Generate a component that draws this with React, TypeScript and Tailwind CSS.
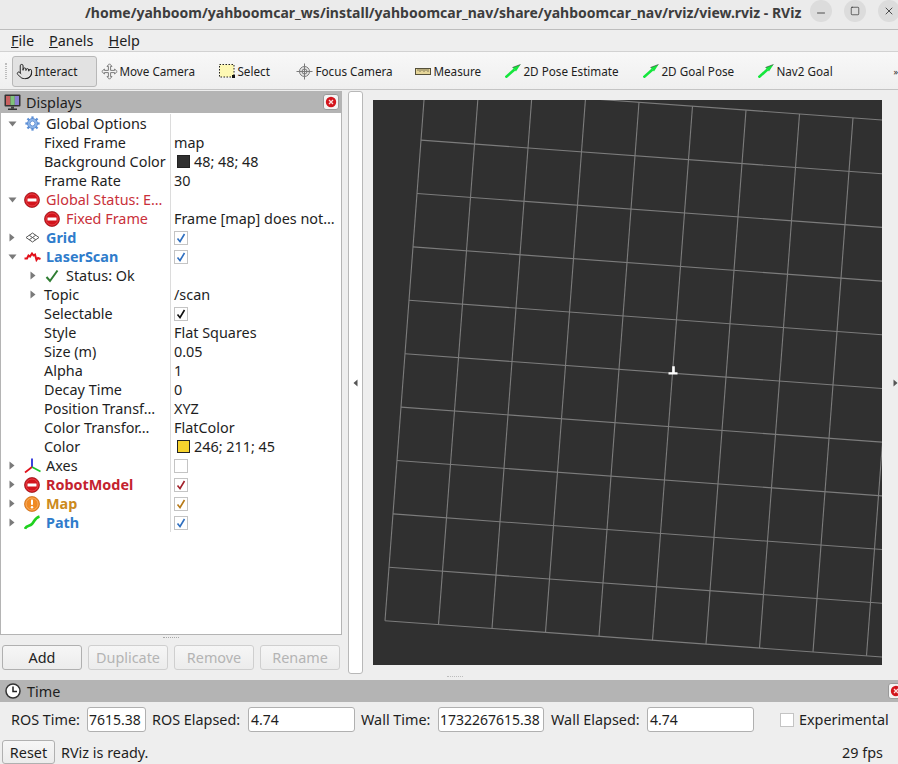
import { ReactNode } from "react";
import { Minus, Square, X, Pointer } from "lucide-react";

function DownArrow() {
  return (
    <svg width="9" height="6" viewBox="0 0 9 6">
      <path d="M0.5 0.5h8L4.5 5.5z" fill="#7a7a7a" />
    </svg>
  );
}

function RightArrow() {
  return (
    <svg width="6" height="9" viewBox="0 0 6 9">
      <path d="M0.5 0.5v8L5.5 4.5z" fill="#7a7a7a" />
    </svg>
  );
}

function StopIcon({ size = 16 }: { size?: number }) {
  return (
    <svg width={size} height={size} viewBox="0 0 16 16">
      <circle cx="8" cy="8" r="7.5" fill="#d3141c" stroke="#8f1015" strokeWidth="0.7" />
      <circle cx="8" cy="8" r="6" fill="none" stroke="#ee5a5f" strokeWidth="0.6" />
      <rect x="3.5" y="6.4" width="9" height="3.2" rx="0.4" fill="#fff" />
    </svg>
  );
}

function WarnIcon() {
  return (
    <svg width="16" height="16" viewBox="0 0 16 16">
      <circle cx="8" cy="8" r="7.5" fill="#f08a24" stroke="#c9660f" strokeWidth="0.7" />
      <circle cx="8" cy="8" r="6" fill="none" stroke="#f8b878" strokeWidth="0.7" />
      <rect x="7" y="3.5" width="2" height="5.5" rx="0.8" fill="#fff" />
      <circle cx="8" cy="11.3" r="1.2" fill="#fff" />
    </svg>
  );
}

function GearIcon() {
  const teeth = [0, 45, 90, 135, 180, 225, 270, 315];
  return (
    <svg width="15" height="15" viewBox="0 0 16 16">
      {teeth.map((a) => (
        <rect key={a} x="6.8" y="0.4" width="2.4" height="3" fill="#5b8fd6" transform={`rotate(${a} 8 8)`} />
      ))}
      <circle cx="8" cy="8" r="5.3" fill="#8fb6e8" stroke="#4f82cc" strokeWidth="0.8" />
      <circle cx="8" cy="8" r="2.6" fill="#fff" stroke="#4f82cc" strokeWidth="0.8" />
    </svg>
  );
}

function GridIcon() {
  return (
    <svg width="15" height="11" viewBox="0 0 15 11" fill="none" stroke="#5a5a5a" strokeWidth="1">
      <path d="M7.5 1 14 5.5 7.5 10 1 5.5z" />
      <path d="M4.2 3.2 10.8 7.8M10.8 3.2 4.2 7.8" />
    </svg>
  );
}

function LaserIcon() {
  return (
    <svg width="17" height="10" viewBox="0 0 17 10" fill="none" stroke="#e2101a" strokeWidth="2">
      <path d="M0.5 6.5 3 6.5 4.5 3.5 6 4.5 8 1.5 9.5 3.5 11 2.5 12.5 8 14 6 16.5 7" />
    </svg>
  );
}

function CheckMark({ color = "#2f7d32" }: { color?: string }) {
  return (
    <svg width="14" height="14" viewBox="0 0 14 14" fill="none" stroke={color} strokeWidth="2">
      <path d="M1.5 8 5 12 12.5 1.5" />
    </svg>
  );
}

function AxesIcon() {
  return (
    <svg width="17" height="16" viewBox="0 0 17 16" fill="none" strokeWidth="1.7">
      <path d="M8 9V0.5" stroke="#1b22d8" />
      <path d="M8 9 1 14.5" stroke="#e0101a" />
      <path d="M8 9 16.5 13.5" stroke="#1fc42a" />
    </svg>
  );
}

function PathIcon() {
  return (
    <svg width="16" height="15" viewBox="0 0 16 15" fill="none" stroke="#1fd11f" strokeWidth="2.6">
      <path d="M1 13.8C2.5 10 5.5 11.5 8 9 10.5 6.5 10.5 3 15.5 1.5" />
    </svg>
  );
}

function MonitorIcon() {
  return (
    <svg width="17" height="17" viewBox="0 0 17 17" className="shrink-0">
      <rect x="0.5" y="0.5" width="16" height="12" rx="1" fill="#333" />
      <rect x="2" y="2" width="4.4" height="9" fill="#c9605f" />
      <rect x="6.4" y="2" width="4.4" height="9" fill="#7fc27a" />
      <rect x="10.8" y="2" width="4.2" height="9" fill="#8a7fd0" />
      <rect x="7" y="12.5" width="3" height="2.2" fill="#444" />
      <rect x="4" y="14.5" width="9" height="1.5" fill="#333" />
    </svg>
  );
}

function ClockIcon() {
  return (
    <svg width="16" height="16" viewBox="0 0 16 16" fill="none" className="shrink-0">
      <circle cx="8" cy="8" r="7" fill="#fff" stroke="#333" strokeWidth="1.5" />
      <path d="M8 3.5V8.5H12" stroke="#222" strokeWidth="1.5" />
    </svg>
  );
}

function CloseBadge() {
  return (
    <span className="flex h-[16px] w-[16px] shrink-0 items-center justify-center rounded-[3px] border border-[#9a9a9a] bg-[#f4f4f4]">
      <svg width="12" height="12" viewBox="0 0 12 12" className="shrink-0">
        <circle cx="6" cy="6" r="5.2" fill="#d3141c" />
        <path d="M4 4l4 4M8 4l-4 4" stroke="#fbdcdc" strokeWidth="1.3" />
      </svg>
    </span>
  );
}

function MoveIcon() {
  return (
    <svg width="17" height="17" viewBox="0 0 17 17" fill="#f2f2f2" stroke="#6e6e6e" strokeWidth="0.9">
      <path d="M8.5 0.8 11 3.4H9.6V7.4H13.6V6L16.2 8.5 13.6 11V9.6H9.6V13.6H11L8.5 16.2 6 13.6H7.4V9.6H3.4V11L0.8 8.5 3.4 6V7.4H7.4V3.4H6z" />
    </svg>
  );
}

function SelectIcon() {
  return (
    <svg width="16" height="14" viewBox="0 0 16 14">
      <rect x="0.5" y="0.5" width="14.5" height="12.5" fill="#fdf8b4" stroke="#222" strokeWidth="1" strokeDasharray="1.5 1.5" />
      <rect x="13" y="11" width="3" height="3" fill="#111" />
    </svg>
  );
}

function FocusIcon() {
  return (
    <svg width="17" height="17" viewBox="0 0 17 17" fill="none" stroke="#7a7a7a">
      <circle cx="8.5" cy="8.5" r="5" fill="#e6e6e6" />
      <circle cx="8.5" cy="8.5" r="2.5" />
      <path d="M8.5 0.5V16.5M0.5 8.5H16.5" />
    </svg>
  );
}

function RulerIcon() {
  return (
    <svg width="16" height="7" viewBox="0 0 16 7">
      <rect x="0.5" y="0.5" width="15" height="6" fill="#e6d69a" stroke="#55503a" />
      <path d="M3 1v2M5 1v3M7 1v2M9 1v3M11 1v2M13 1v3" stroke="#55503a" strokeWidth="0.7" />
    </svg>
  );
}

function GreenArrow() {
  return (
    <svg width="16" height="14" viewBox="0 0 16 14">
      <path d="M0.5 13.5 9.5 5.5" stroke="#14e63c" strokeWidth="2.6" />
      <path d="M15.5 0.5 7.5 3.5 11 7.5z" fill="#14e63c" />
      <path d="M15.5 0.5 7.5 3.5" stroke="#333" strokeWidth="0.6" />
    </svg>
  );
}

function Checkbox({ color, checked = true }: { color?: string; checked?: boolean }) {
  return (
    <span className="flex h-[14px] w-[14px] items-center justify-center border border-[#c4c4c4] bg-white">
      {checked && (
        <svg width="10" height="10" viewBox="0 0 10 10" fill="none" stroke={color} strokeWidth="1.6">
          <path d="M1.5 5.5 4 8.5 8.5 1" />
        </svg>
      )}
    </span>
  );
}

function Swatch({ className, text }: { className: string; text: string }) {
  return (
    <span className="ml-[3px] flex items-center">
      <span className={`mr-[4px] h-[13px] w-[13px] border border-[#222] ${className}`} />
      {text}
    </span>
  );
}

type Row = {
  arrow?: ReactNode;
  arrowClass?: string;
  icon?: ReactNode;
  iconClass?: string;
  label: string;
  labelClass: string;
  value?: ReactNode;
};

const PROP = "ml-[43px]";
const TOP_ARROW = "w-[23px] pl-[7px]";
const BOLD_BLUE = "font-bold text-[#2f7ccb]";

const rows: Row[] = [
  { arrow: <DownArrow />, arrowClass: TOP_ARROW, icon: <GearIcon />, iconClass: "w-[22px] pl-[1px]", label: "Global Options", labelClass: "" },
  { label: "Fixed Frame", labelClass: PROP, value: "map" },
  { label: "Background Color", labelClass: PROP, value: <Swatch className="bg-[#303030]" text="48; 48; 48" /> },
  { label: "Frame Rate", labelClass: PROP, value: "30" },
  { arrow: <DownArrow />, arrowClass: TOP_ARROW, icon: <StopIcon />, iconClass: "w-[22px]", label: "Global Status: E…", labelClass: "text-[#c9303a]" },
  { icon: <StopIcon />, iconClass: "ml-[43px] w-[22px]", label: "Fixed Frame", labelClass: "text-[#c9303a]", value: "Frame [map] does not…" },
  { arrow: <RightArrow />, arrowClass: "w-[23px] pl-[8px]", icon: <GridIcon />, iconClass: "w-[22px] pl-[1px]", label: "Grid", labelClass: BOLD_BLUE, value: <Checkbox color="#2f6fc0" /> },
  { arrow: <DownArrow />, arrowClass: TOP_ARROW, icon: <LaserIcon />, iconClass: "w-[22px]", label: "LaserScan", labelClass: BOLD_BLUE, value: <Checkbox color="#2f6fc0" /> },
  { arrow: <RightArrow />, arrowClass: "w-[44px] pl-[29px]", icon: <CheckMark />, iconClass: "w-[21px]", label: "Status: Ok", labelClass: "" },
  { arrow: <RightArrow />, arrowClass: "w-[43px] pl-[29px]", label: "Topic", labelClass: "", value: "/scan" },
  { label: "Selectable", labelClass: PROP, value: <Checkbox color="#111" /> },
  { label: "Style", labelClass: PROP, value: "Flat Squares" },
  { label: "Size (m)", labelClass: PROP, value: "0.05" },
  { label: "Alpha", labelClass: PROP, value: "1" },
  { label: "Decay Time", labelClass: PROP, value: "0" },
  { label: "Position Transf…", labelClass: PROP, value: "XYZ" },
  { label: "Color Transfor…", labelClass: PROP, value: "FlatColor" },
  { label: "Color", labelClass: PROP, value: <Swatch className="bg-[#f6d32d]" text="246; 211; 45" /> },
  { arrow: <RightArrow />, arrowClass: "w-[23px] pl-[8px]", icon: <AxesIcon />, iconClass: "w-[22px]", label: "Axes", labelClass: "", value: <Checkbox checked={false} /> },
  { arrow: <RightArrow />, arrowClass: "w-[23px] pl-[8px]", icon: <StopIcon />, iconClass: "w-[22px]", label: "RobotModel", labelClass: "font-bold text-[#c4222e]", value: <Checkbox color="#a3222c" /> },
  { arrow: <RightArrow />, arrowClass: "w-[23px] pl-[8px]", icon: <WarnIcon />, iconClass: "w-[22px]", label: "Map", labelClass: "font-bold text-[#cc8a1c]", value: <Checkbox color="#b87a18" /> },
  { arrow: <RightArrow />, arrowClass: "w-[23px] pl-[8px]", icon: <PathIcon />, iconClass: "w-[22px]", label: "Path", labelClass: BOLD_BLUE, value: <Checkbox color="#2f6fc0" /> },
];

function TreeRow({ row }: { row: Row }) {
  return (
    <div className="flex h-[19px] items-center">
      <div className="flex h-full w-[170px] shrink-0 items-center overflow-hidden border-r border-[#dcdcdc] whitespace-nowrap">
        {row.arrow && <span className={`flex shrink-0 items-center ${row.arrowClass}`}>{row.arrow}</span>}
        {row.icon && <span className={`flex shrink-0 items-center ${row.iconClass}`}>{row.icon}</span>}
        <span className={row.labelClass}>{row.label}</span>
      </div>
      <div className="flex h-full items-center pl-[3px] whitespace-nowrap">{row.value}</div>
    </div>
  );
}

function ToolItem({ icon, label, className }: { icon: ReactNode; label: string; className: string }) {
  return (
    <div className={`flex shrink-0 items-center ${className}`}>
      {icon}
      <span>{label}</span>
    </div>
  );
}

// rotated grid in the 3D view, 10 x 10 cells, numbers read off the picture
function GridView() {
  const ox = 12;
  const oy = 520.7;
  const ux = 53.5;
  const uy = 3.9;
  const vx = 4;
  const vy = -53.4;
  const steps = Array.from({ length: 11 }, (_, i) => i);
  return (
    <svg width="509" height="565" viewBox="0 0 509 565" className="block shrink-0">
      <rect width="509" height="565" fill="#303030" />
      <g stroke="#7c7c7c" strokeWidth="1.1">
        {steps.map((i) => (
          <line
            key={`u${i}`}
            x1={ox + vx * i}
            y1={oy + vy * i}
            x2={ox + vx * i + ux * 10}
            y2={oy + vy * i + uy * 10}
          />
        ))}
        {steps.map((i) => (
          <line
            key={`v${i}`}
            x1={ox + ux * i}
            y1={oy + uy * i}
            x2={ox + ux * i + vx * 10}
            y2={oy + uy * i + vy * 10}
          />
        ))}
      </g>
      <path d="M295.5 272.2H304.5V274.6H295.5zM299.2 266.2H301.8V272.5H299.2z" fill="#fff" />
    </svg>
  );
}

function PanelButton({ label, disabled, className }: { label: string; disabled?: boolean; className?: string }) {
  return (
    <button
      className={`h-[25px] rounded-[3px] border ${
        disabled ? "border-[#cfcfcf] text-[#b4b4b4]" : "border-[#b0b0b0] text-[#222]"
      } bg-gradient-to-b from-[#f6f6f6] to-[#ececec] ${className ?? ""}`}
    >
      {label}
    </button>
  );
}

function TimeField({ value, className }: { value: string; className: string }) {
  return (
    <div className={`flex h-[25px] shrink-0 items-center overflow-hidden rounded-[3px] border border-[#b0b0b0] bg-white text-[14px] ${className}`}>
      {value}
    </div>
  );
}

export default function App() {
  return (
    <div className="flex h-[764px] w-[898px] flex-col overflow-hidden bg-[#eeeeee] text-[14.4px] leading-[19px] text-[#1e1e1e] [font-family:'Noto_Sans',sans-serif]">
      {/* window title */}
      <div className="flex h-[30px] shrink-0 items-center border-b border-[#bdbdbd] bg-[#ebebeb]">
        <div className="ml-[85px] mb-[5px] w-[722px] shrink-0 text-[14px] font-bold whitespace-nowrap text-[#3d3d3d]">
          /home/yahboom/yahboomcar_ws/install/yahboomcar_nav/share/yahboomcar_nav/rviz/view.rviz - RViz
        </div>
        <div className="ml-[3px] mb-[7px] flex shrink-0 gap-[12px]">
          <span className="flex h-[22px] w-[22px] shrink-0 items-center justify-center rounded-full bg-[#dcdcdc]">
            <Minus size={12} strokeWidth={1.5} className="mt-[4px]" />
          </span>
          <span className="flex h-[22px] w-[22px] shrink-0 items-center justify-center rounded-full bg-[#dcdcdc]">
            <Square size={10} strokeWidth={1.5} />
          </span>
          <span className="flex h-[22px] w-[22px] shrink-0 items-center justify-center rounded-full bg-[#dcdcdc]">
            <X size={12} strokeWidth={1.5} />
          </span>
        </div>
      </div>

      {/* menu */}
      <div className="flex h-[22px] shrink-0 items-center gap-[14px] border-b border-[#d2d2d2] pl-[11px]">
        <span><span className="underline">F</span>ile</span>
        <span className="ml-[1px]"><span className="underline">P</span>anels</span>
        <span className="ml-[1px]"><span className="underline">H</span>elp</span>
      </div>

      {/* toolbar */}
      <div className="flex h-[38px] shrink-0 items-center border-b border-[#c4c4c4] bg-gradient-to-b from-[#f8f8f8] to-[#efefef] pt-[1px] text-[11.7px]">
        <div className="ml-[5px] h-[16px] w-[3px] border-x border-dotted border-[#bdbdbd]" />
        <ToolItem
          icon={<Pointer size={17} strokeWidth={1.4} className="mr-[1px] text-[#222]" />}
          label="Interact"
          className="ml-[5px] h-[31px] w-[85px] rounded-[3px] border border-[#b8b8b8] bg-[#e2e2e2] pl-[3px]"
        />
        <ToolItem icon={<span className="mr-[1px] flex"><MoveIcon /></span>} label="Move Camera" className="ml-[4px] w-[118px]" />
        <ToolItem icon={<span className="mr-[2px] flex"><SelectIcon /></span>} label="Select" className="w-[77px]" />
        <ToolItem icon={<span className="mr-[2px] flex"><FocusIcon /></span>} label="Focus Camera" className="w-[119px]" />
        <ToolItem icon={<span className="mr-[2px] flex"><RulerIcon /></span>} label="Measure" className="w-[90px]" />
        <ToolItem icon={<span className="mr-[2px] flex"><GreenArrow /></span>} label="2D Pose Estimate" className="w-[138px]" />
        <ToolItem icon={<span className="mr-[2px] flex"><GreenArrow /></span>} label="2D Goal Pose" className="w-[115px]" />
        <ToolItem icon={<span className="mr-[2px] flex"><GreenArrow /></span>} label="Nav2 Goal" className="w-[135px]" />
        <span className="shrink-0 text-[9px]">»</span>
      </div>

      {/* main area */}
      <div className="flex h-[590px] shrink-0">
        <div className="flex w-[342px] shrink-0 flex-col pt-[1px]">
          <div className="flex h-[22px] shrink-0 items-center bg-[#b4b4b4] pl-[4px]">
            <MonitorIcon />
            <span className="ml-[5px]">Displays</span>
            <span className="ml-auto mr-[3px]"><CloseBadge /></span>
          </div>
          <div className="h-[522px] shrink-0 border border-t-0 border-[#b4b4b4] bg-white pt-[1px]">
            {rows.map((row) => (
              <TreeRow key={row.label + row.labelClass + (row.icon ? "i" : "")} row={row} />
            ))}
          </div>
          <div className="mx-auto mt-[2px] h-[1px] w-[16px] border-t border-dotted border-[#a8a8a8]" />
          <div className="mt-[7px] flex gap-[6px] pl-[2px]">
            <PanelButton label="Add" className="w-[80px]" />
            <PanelButton label="Duplicate" disabled className="w-[80px]" />
            <PanelButton label="Remove" disabled className="w-[80px]" />
            <PanelButton label="Rename" disabled className="w-[80px]" />
          </div>
        </div>

        <div className="ml-[6px] mt-[1px] flex h-[583px] w-[15px] shrink-0 items-center justify-center rounded-[3px] border border-[#b8b8b8] bg-white">
          <svg width="5" height="8" viewBox="0 0 5 8"><path d="M4.5 0.5v7L0.5 4z" fill="#555" /></svg>
        </div>

        <div className="ml-[10px] flex w-[525px] shrink-0 flex-col pt-[10px]">
          <div className="flex items-center">
            <GridView />
            <svg width="5" height="8" viewBox="0 0 5 8" className="ml-[11px] shrink-0"><path d="M0.5 0.5v7L4.5 4z" fill="#555" /></svg>
          </div>
          <div className="ml-[74px] mt-[11px] h-[1px] w-[16px] border-t border-dotted border-[#bdbdbd]" />
        </div>
      </div>

      {/* time panel */}
      <div className="flex h-[22px] shrink-0 items-center bg-[#b4b4b4] pl-[5px]">
        <ClockIcon />
        <span className="ml-[6px] w-[861px] shrink-0">Time</span>
        <CloseBadge />
      </div>
      <div className="mt-[5px] flex h-[25px] shrink-0 items-center whitespace-nowrap">
        <span className="ml-[11px] w-[76px] shrink-0">ROS Time:</span>
        <TimeField value="7615.38" className="w-[59px] pl-[1px]" />
        <span className="ml-[6px] w-[96px] shrink-0">ROS Elapsed:</span>
        <TimeField value="4.74" className="w-[107px] pl-[2px]" />
        <span className="ml-[6px] w-[77px] shrink-0">Wall Time:</span>
        <TimeField value="1732267615.38" className="w-[106px] pl-[1px]" />
        <span className="ml-[7px] w-[96px] shrink-0">Wall Elapsed:</span>
        <TimeField value="4.74" className="w-[107px] pl-[2px]" />
        <span className="ml-[26px] h-[14px] w-[14px] shrink-0 border border-[#c4c4c4] bg-white" />
        <span className="ml-[5px]">Experimental</span>
      </div>
      <div className="mt-[8px] flex h-[24px] shrink-0 items-center">
        <button className="ml-[2px] h-[24px] w-[53px] rounded-[3px] border border-[#b0b0b0] bg-gradient-to-b from-[#f6f6f6] to-[#ececec]">Reset</button>
        <span className="ml-[6px]">RViz is ready.</span>
        <span className="ml-auto mr-[15px]">29 fps</span>
      </div>
    </div>
  );
}
